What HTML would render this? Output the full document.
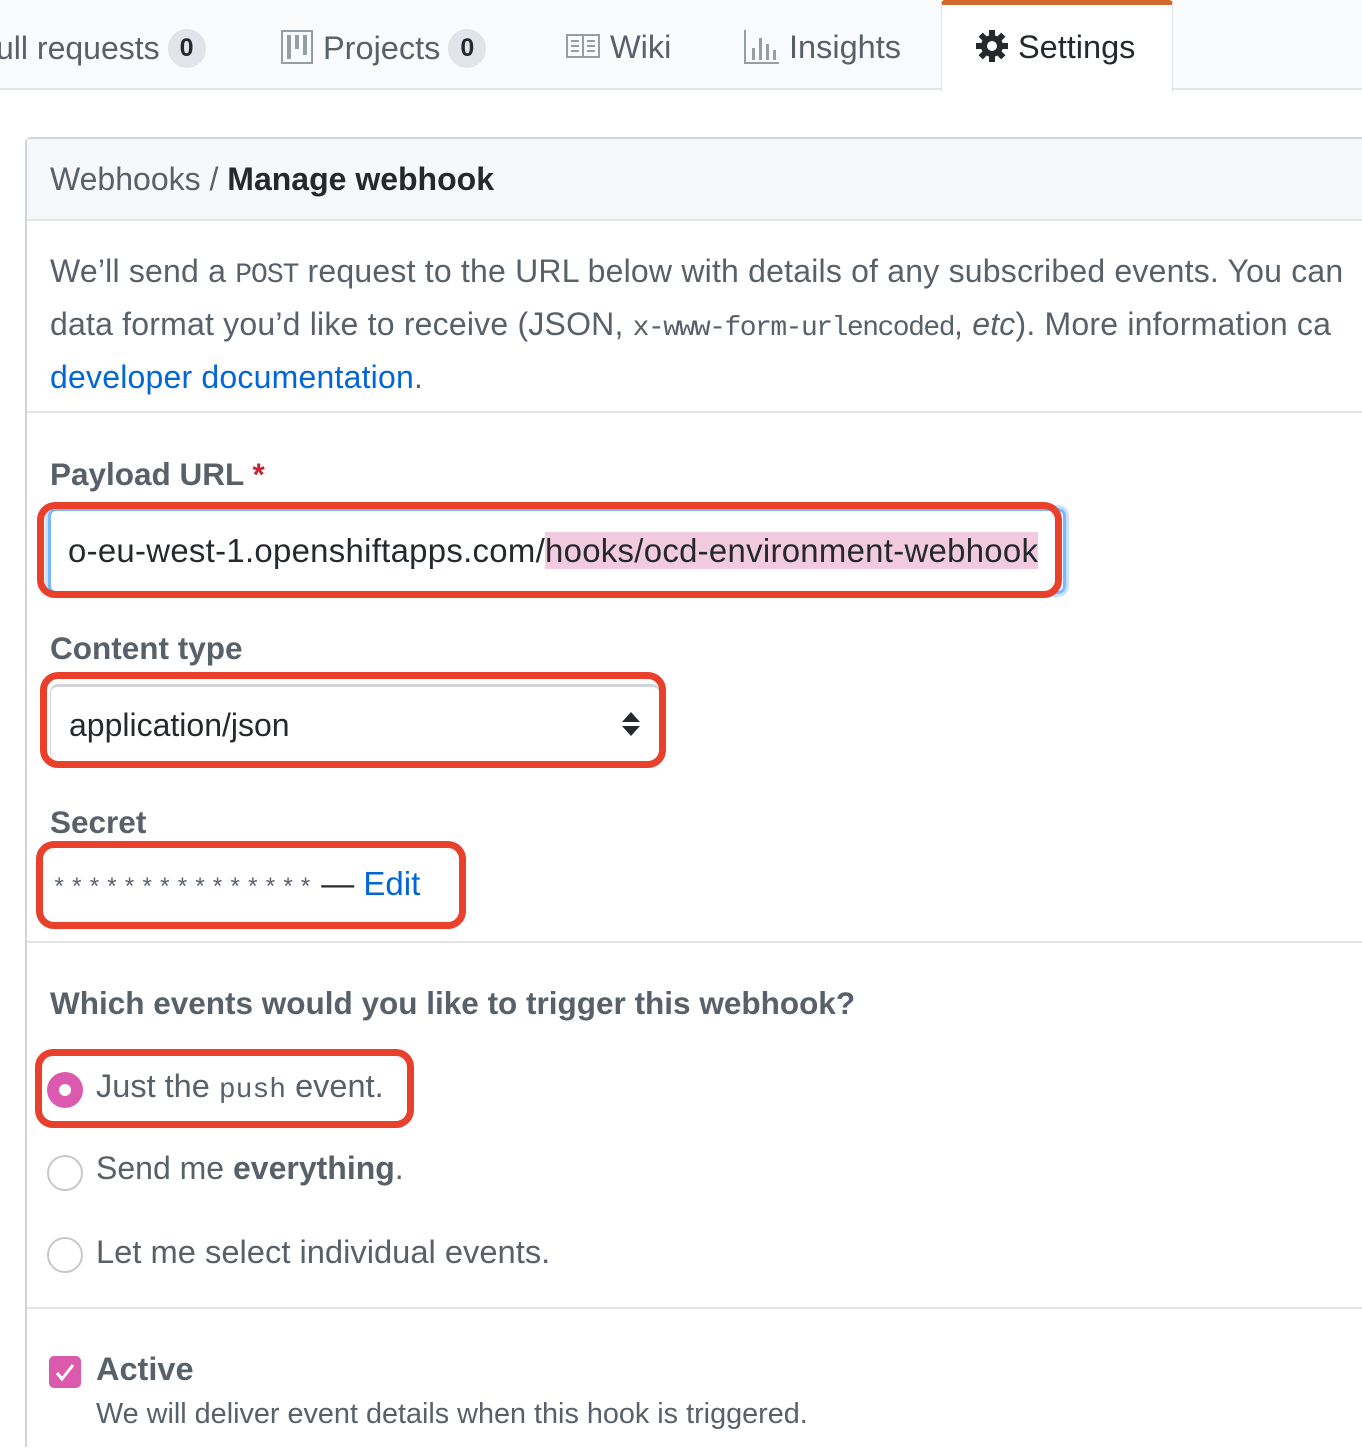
<!DOCTYPE html>
<html><head><meta charset="utf-8"><style>
*{margin:0;padding:0;box-sizing:border-box}
html,body{width:1362px;height:1452px;overflow:hidden;background:#fff;font-family:"Liberation Sans",sans-serif;color:#586069}
.a{position:absolute;white-space:nowrap}
.mono{font-family:"Liberation Mono",monospace}
.red{position:absolute;border:7px solid #e8402a;border-radius:18px}
.lbl{font-weight:bold;font-size:31.5px;color:#586069}
.radio{position:absolute;width:36px;height:36px;border-radius:50%;border:2px solid #c8c8c8;background:#fff}
.cnt{display:inline-block;background:#e1e4e8;color:#24292e;border-radius:20px;font-size:25px;font-weight:bold;padding:5px 12px;vertical-align:3px;margin-left:8px}
</style></head><body>
<div class="a" style="left:0;top:0;width:1362px;height:90px;background:#fafbfc;border-bottom:2px solid #e1e4e8"></div>
<div class="a" style="left:941px;top:0;width:232px;height:92px;background:#fff;border:1px solid #e1e4e8;border-top:5px solid #d26a2b;border-bottom:none;border-radius:4px 4px 0 0"></div>
<div class="a" style="left:-4px;top:29px;font-size:32px;color:#586069">ull requests<span class="cnt">0</span></div>
<svg class="a" style="left:281px;top:30px" width="32" height="34" viewBox="0 0 32 34"><rect x="1" y="1" width="30" height="32" fill="none" stroke="#959da5" stroke-width="2"/><rect x="6" y="5" width="4" height="24" fill="#959da5"/><rect x="14" y="5" width="4" height="14" fill="#959da5"/><rect x="22" y="5" width="4" height="20" fill="#959da5"/></svg>
<div class="a" style="left:323px;top:29px;font-size:32.5px">Projects<span class="cnt">0</span></div>
<svg class="a" style="left:566px;top:34px" width="34" height="24" viewBox="0 0 34 24"><rect x="1" y="1" width="32" height="22" fill="none" stroke="#959da5" stroke-width="2"/><line x1="17" y1="1" x2="17" y2="23" stroke="#959da5" stroke-width="2"/><path d="M5 7h8M5 12h8M5 17h8M21 7h8M21 12h8M21 17h8" stroke="#959da5" stroke-width="2"/></svg>
<div class="a" style="left:610px;top:29px;font-size:32.5px">Wiki</div>
<svg class="a" style="left:744px;top:30px" width="36" height="34" viewBox="0 0 36 34"><path d="M1 0v33h34" fill="none" stroke="#959da5" stroke-width="2"/><rect x="8" y="18" width="3" height="12" fill="#959da5"/><rect x="15" y="8" width="3" height="22" fill="#959da5"/><rect x="22" y="14" width="3" height="16" fill="#959da5"/><rect x="29" y="20" width="3" height="10" fill="#959da5"/></svg>
<div class="a" style="left:789px;top:29px;font-size:32.5px">Insights</div>
<svg class="a" style="left:976px;top:30px" width="32" height="32" viewBox="0 0 32 32"><g fill="#24292e"><circle cx="16" cy="16" r="11"/><rect x="13" y="0" width="6" height="32"/><rect x="0" y="13" width="32" height="6"/><rect x="13" y="0" width="6" height="32" transform="rotate(45 16 16)"/><rect x="13" y="0" width="6" height="32" transform="rotate(-45 16 16)"/></g><circle cx="16" cy="16" r="5" fill="#fff"/></svg>
<div class="a" style="left:1018px;top:29px;font-size:32.5px;color:#24292e">Settings</div>
<div class="a" style="left:25px;top:137px;width:1400px;height:1310px;border:2px solid #d1d5da;border-bottom:none;border-radius:6px 6px 0 0"></div>
<div class="a" style="left:27px;top:139px;width:1340px;height:82px;background:#f6f8fa;border-bottom:2px solid #e1e4e8"></div>
<div class="a" style="left:50px;top:161px;font-size:32px;color:#586069">Webhooks / <b style="color:#24292e">Manage webhook</b></div>
<div class="a" style="left:50px;top:247px;font-size:32px;line-height:48px;letter-spacing:0.2px">We’ll send a <span class="mono" style="font-size:28px;letter-spacing:-1px">POST</span> request to the URL below with details of any subscribed events. You can<br>data format you’d like to receive (JSON, <span class="mono" style="font-size:28px;letter-spacing:-1.5px">x-www-form-urlencoded</span>, <i>etc</i>). More information ca<br><span style="color:#0366d6">developer documentation</span>.</div>
<div class="a" style="left:27px;top:411px;width:1340px;height:2px;background:#e1e4e8"></div>
<div class="a lbl" style="left:50px;top:456px">Payload URL <span style="color:#cb2431">*</span></div>
<div class="a" style="left:48px;top:508px;width:1018px;height:86px;border:3px solid #79b8ff;border-radius:8px;box-shadow:0 0 0 3px #c8e1ff"></div>
<div class="a" style="left:68px;top:532px;font-size:32.9px;letter-spacing:0.3px;color:#24292e">o-eu-west-1.openshiftapps.com/<span style="background:#f3cbe1">hooks/ocd-environment-webhook</span></div>
<div class="red" style="left:37px;top:502px;width:1025px;height:96px"></div>
<div class="a lbl" style="left:50px;top:630px">Content type</div>
<div class="a" style="left:50px;top:684px;width:610px;height:78px;border:1px solid #d1d5da;border-top:3px solid #d1d5da;border-radius:8px;background:#fff"></div>
<div class="a" style="left:69px;top:707px;font-size:32px;color:#24292e">application/json</div>
<svg class="a" style="left:621px;top:712px" width="20" height="24" viewBox="0 0 20 24"><path d="M10 0L19 10H1Z M10 24L19 14H1Z" fill="#24292e"/></svg>
<div class="red" style="left:40px;top:672px;width:626px;height:96px"></div>
<div class="a lbl" style="left:50px;top:804px">Secret</div>
<div class="a" style="left:52px;top:865px;font-size:33px;color:#24292e"><span class="mono" style="font-size:24px;letter-spacing:3.2px;color:#586069">***************</span> <span style="margin-left:-4px">—</span> <span style="color:#0366d6">Edit</span></div>
<div class="red" style="left:36px;top:841px;width:430px;height:88px"></div>
<div class="a" style="left:27px;top:941px;width:1340px;height:2px;background:#e1e4e8"></div>
<div class="a lbl" style="left:50px;top:985px;font-size:31.5px">Which events would you like to trigger this webhook?</div>
<div class="a" style="left:47px;top:1072px;width:36px;height:36px;border-radius:50%;background:#dc5aad"></div>
<div class="a" style="left:59px;top:1084px;width:12px;height:12px;border-radius:50%;background:#fff"></div>
<div class="a" style="left:96px;top:1068px;font-size:32.5px">Just the <span class="mono" style="font-size:28px">push</span> event.</div>
<div class="red" style="left:35px;top:1049px;width:379px;height:79px"></div>
<div class="radio" style="left:47px;top:1155px"></div>
<div class="a" style="left:96px;top:1150px;font-size:32px">Send me <b>everything</b>.</div>
<div class="radio" style="left:47px;top:1237px"></div>
<div class="a" style="left:96px;top:1233px;font-size:32.7px">Let me select individual events.</div>
<div class="a" style="left:27px;top:1307px;width:1340px;height:2px;background:#e1e4e8"></div>
<div class="a" style="left:49px;top:1356px;width:32px;height:32px;border-radius:5px;background:#dc5aad"></div>
<svg class="a" style="left:53px;top:1360px" width="24" height="24" viewBox="0 0 24 24"><path d="M4 13l5 6L20 5" fill="none" stroke="#fff" stroke-width="3"/></svg>
<div class="a lbl" style="left:96px;top:1351px;font-size:32.5px">Active</div>
<div class="a" style="left:96px;top:1398px;font-size:28.8px">We will deliver event details when this hook is triggered.</div>
</body></html>
